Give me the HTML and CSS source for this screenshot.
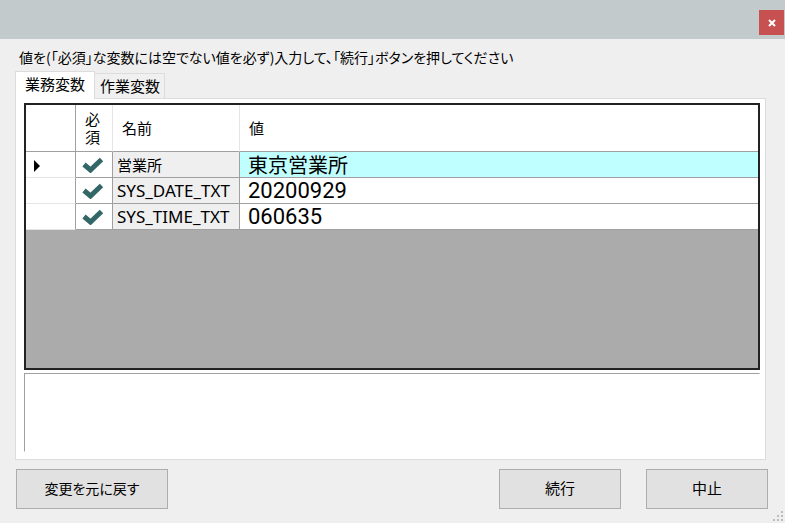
FILE: index.html
```html
<!DOCTYPE html>
<html lang="ja">
<head>
    <meta charset="UTF-8">
    <meta name="viewport" content="width=device-width, initial-scale=1.0">
    <title>変数入力</title>
    <link rel="stylesheet" href="styles.css">
</head>
<body>
    <header class="titlebar">
        <button type="button" class="close" aria-label="閉じる">
            <svg width="8" height="8" viewBox="0 0 8 8"><path d="M1 1L7 7M7 1L1 7" /></svg>
        </button>
    </header>

    <main class="dialog">
        <p class="message">値を(「必須」な変数には空でない値を必ず)入力して、「続行」ボタンを押してください</p>

        <div class="tabs" role="tablist">
            <button type="button" class="tab active" role="tab" aria-selected="true">業務変数</button>
            <button type="button" class="tab" role="tab" aria-selected="false">作業変数</button>
        </div>

        <div class="panel" role="tabpanel">
            <!-- Variable grid -->
            <div class="grid">
                <table>
                    <thead>
                        <tr>
                            <th class="col-marker"></th>
                            <th class="col-required">必須</th>
                            <th class="col-name">名前</th>
                            <th class="col-value">値</th>
                        </tr>
                    </thead>
                    <tbody>
                        <tr class="current">
                            <td class="marker"><svg width="6" height="12" viewBox="0 0 6 12"><path d="M0 0L6 6L0 12Z" /></svg></td>
                            <td class="required"><svg width="22" height="16" viewBox="0 0 22 16"><path d="M2 7.5L8.5 13L19.5 2.5" /></svg></td>
                            <td class="name">営業所</td>
                            <td class="value text">東京営業所</td>
                        </tr>
                        <tr>
                            <td class="marker"></td>
                            <td class="required"><svg width="22" height="16" viewBox="0 0 22 16"><path d="M2 7.5L8.5 13L19.5 2.5" /></svg></td>
                            <td class="name">SYS_DATE_TXT</td>
                            <td class="value">20200929</td>
                        </tr>
                        <tr>
                            <td class="marker"></td>
                            <td class="required"><svg width="22" height="16" viewBox="0 0 22 16"><path d="M2 7.5L8.5 13L19.5 2.5" /></svg></td>
                            <td class="name">SYS_TIME_TXT</td>
                            <td class="value">060635</td>
                        </tr>
                    </tbody>
                </table>
            </div>
            <textarea class="description" aria-label="説明" readonly></textarea>
        </div>

        <div class="buttons">
            <button type="button" class="btn btn-reset">変更を元に戻す</button>
            <button type="button" class="btn">続行</button>
            <button type="button" class="btn">中止</button>
        </div>
    </main>

    <!-- Resize grip -->
    <svg class="grip" width="11" height="11" viewBox="0 0 11 11">
        <path d="M8 0h2v2h-2zM4 4h2v2h-2zM8 4h2v2h-2zM0 8h2v2h-2zM4 8h2v2h-2zM8 8h2v2h-2z" />
    </svg>
</body>
</html>
```
FILE: styles.css
```css
* {
    box-sizing: border-box;
}

body {
    margin: 0;
    min-height: 100vh;
    display: flex;
    flex-direction: column;
    background-color: #efefef;
    color: #000;
    font-family: "Noto Sans CJK JP", sans-serif;
    font-size: 15px;
    line-height: 20px;
}

button {
    font: inherit;
    color: inherit;
    padding: 0;
}

/* Title bar */
.titlebar {
    height: 39px;
    padding: 10px 1px 0;
    display: flex;
    justify-content: flex-end;
    background-color: #c3cacc;
}

.close {
    width: 25px;
    height: 25px;
    display: flex;
    align-items: center;
    justify-content: center;
    border: none;
    background-color: #c75050;
}

.close svg path {
    stroke: #fff;
    stroke-width: 2;
}

/* Dialog body */
.dialog {
    flex: 1;
    display: flex;
    flex-direction: column;
    padding: 8px 17px 14px 15px;
}

.message {
    margin: 0 0 4px;
    padding-left: 4px;
    font-size: 14px;
    font-feature-settings: "palt";
}

/* Tabs */
.tabs {
    display: flex;
    align-items: flex-end;
}

.tab {
    height: 25px;
    padding: 0 4px 0 5px;
    border: 1px solid #dcdcdc;
    border-left: none;
    border-bottom: none;
    background-color: #f0f0f0;
}

.tab.active {
    height: 28px;
    margin-bottom: -1px;
    padding: 0 9px 4px;
    border-left: 1px solid #dcdcdc;
    background-color: #fff;
    z-index: 1;
}

.panel {
    flex: 1;
    display: flex;
    flex-direction: column;
    gap: 3px;
    margin-right: 2px;
    padding: 4px 5px 7px 8px;
    border: 1px solid #dcdcdc;
    background-color: #fff;
}

/* Variable grid */
.grid {
    flex: 1;
    border: 2px solid #222;
    background-color: #ababab;
}

table {
    width: 100%;
    border-collapse: separate;
    border-spacing: 0;
    table-layout: fixed;
}

th {
    height: 47px;
    padding: 0 9px;
    border-right: 1px solid #e5e5e5;
    border-bottom: 1px solid #a0a0a0;
    background-color: #fff;
    font-weight: normal;
    line-height: 18px;
    text-align: left;
}

.col-marker {
    width: 50px;
    border-right-color: #a0a0a0;
}

.col-required {
    width: 37px;
    padding: 0 9px;
    word-break: break-all;
}

.col-name {
    width: 127px;
}

.col-value {
    border-right: none;
}

td {
    height: 26px;
    padding: 0 4px;
    border-right: 1px solid #a0a0a0;
    border-bottom: 1px solid #a0a0a0;
    background-color: #fff;
    line-height: 24px;
    white-space: nowrap;
}

td svg {
    display: block;
}

.marker {
    padding: 3px 8px 0;
    border-bottom-color: #e5e5e5;
}

.required {
    padding: 0 6px;
}

.required svg path {
    fill: none;
    stroke: #336666;
    stroke-width: 5;
}

.name {
    background-color: #efefef;
    font-family: "Noto Sans", "Noto Sans CJK JP", sans-serif;
    font-size: 17px;
}

.current .name {
    font-size: 15px;
}

.value {
    padding: 0 8px;
    border-right: none;
    font-family: Roboto, sans-serif;
    font-size: 22px;
}

.value.text {
    font-family: "Noto Sans CJK JP", sans-serif;
    font-size: 20px;
}

.current .value {
    background-color: #c0ffff;
}

.description {
    display: block;
    width: 100%;
    height: 79px;
    border: 1px solid transparent;
    border-top-color: #a0a0a0;
    border-left-color: #a0a0a0;
    background-color: #fff;
    font: inherit;
    resize: none;
    outline: none;
}

/* Bottom buttons */
.buttons {
    display: flex;
    gap: 25px;
    padding-top: 9px;
}

.btn {
    width: 122px;
    height: 40px;
    padding-bottom: 2px;
    border: 1px solid #adadad;
    background-color: #e1e1e1;
}

.btn-reset {
    width: 152px;
    margin: 0 auto 0 1px;
    font-size: 14px;
    font-feature-settings: "palt";
}

.grip {
    position: absolute;
    right: 1px;
    bottom: 1px;
    fill: #bcbcbc;
}
```
